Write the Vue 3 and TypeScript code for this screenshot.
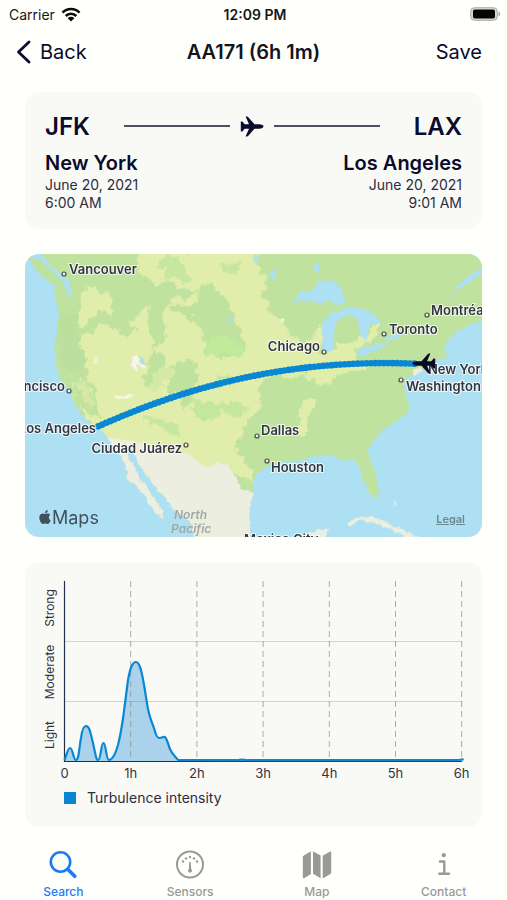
<script setup lang="ts">
import { ref } from 'vue'

interface Place {
  name: string
  x: number
  y: number
  anchor?: 'start' | 'end'
  dot?: [number, number]
}

const places: Place[] = [
  { name: 'Vancouver', x: 44, y: 20, dot: [39, 20] },
  { name: 'Montréal', x: 406, y: 61, dot: [402, 61] },
  { name: 'Toronto', x: 364, y: 80, dot: [359, 80] },
  { name: 'Chicago', x: 295, y: 97, anchor: 'end', dot: [299, 98] },
  { name: 'New York', x: 403, y: 120 },
  { name: 'Washington', x: 381, y: 137, dot: [376, 126] },
  { name: 'San Francisco', x: 40, y: 137, anchor: 'end', dot: [44, 137] },
  { name: 'Los Angeles', x: 71, y: 179, anchor: 'end' },
  { name: 'Ciudad Juárez', x: 157, y: 199, anchor: 'end', dot: [161, 191] },
  { name: 'Dallas', x: 236, y: 181, dot: [232, 182] },
  { name: 'Houston', x: 246, y: 218, dot: [242, 207] },
  { name: 'Mexico City', x: 219, y: 290 },
]

const hours = [0, 1, 2, 3, 4, 5, 6].map((h) => ({
  x: 39.5 + h * 66.2,
  label: h === 0 ? '0' : `${h}h`,
}))

const levels = [
  { name: 'Strong', y: 46 },
  { name: 'Moderate', y: 110 },
  { name: 'Light', y: 173 },
]

const curve =
  'M39.5 198C42 192 43 186 45 186C48 186 48 198 51 198C54 198 54 186 56 176C57 168 59 164 61 164' +
  'C65 164 66 174 68 181C70 190 71 198 73 198C76 198 76 181 78.5 181C81 181 81 198 84 198' +
  'C88 198 91 190 93 183C96 171 97 163 98.5 153L103 118C105 107 107 100 111 100C115 100 117 112 118.5 120' +
  'C121 133 122 145 124.5 153C126 159 128 163 129 166C130 170 132 176 134 176C136 176 138 174.5 140 175' +
  'C143 178 143 184 146 189C148 193 151 195 153 198L212 198.2Q217 197 222 198.2H430Q436 198 438.5 197'

const planePath =
  'M23.5 10.5C23.5 9.3 21.5 8.3 19.5 8.3H14.5L8.3 1.2C7.9 .7 7.5 .4 6.9 .4H5.6L9 8.3H4.7L2.6 5.7C2.4 5.5 2.2 5.4 2 5.4H.8V15.6H2C2.2 15.6 2.4 15.5 2.6 15.3L4.7 12.7H9L5.6 20.6H6.9C7.5 20.6 7.9 20.3 8.3 19.8L14.5 12.7H19.5C21.5 12.7 23.5 11.7 23.5 10.5Z'

const active = ref('Search')
</script>

<template>
  <div class="screen">
    <div class="status">
      <span class="carrier">
        Carrier
        <svg width="20" height="15" viewBox="0 0 20 15" aria-hidden="true">
          <g fill="none" stroke="#0a0a0a" stroke-width="2.6">
            <path d="M1.5 5.6a12 12 0 0 1 17 0" />
            <path d="M4.7 9a7.5 7.5 0 0 1 10.6 0" />
          </g>
          <path d="M10 14.5 6.7 11.2a4.7 4.7 0 0 1 6.6 0z" fill="#0a0a0a" />
        </svg>
      </span>
      <span class="clock">12:09 PM</span>
      <span class="battery">
        <svg width="31" height="14" viewBox="0 0 31 14" aria-hidden="true">
          <rect x=".7" y=".7" width="26.6" height="12.6" rx="3.8" fill="#d9d9d5" stroke="#aaaaa7" />
          <rect x="3" y="2.5" width="22" height="9" rx="1.8" fill="#050505" />
          <path d="M28.5 4.5c2.3.8 2.3 4.2 0 5z" fill="#aaaaa7" />
        </svg>
      </span>
    </div>

    <header class="nav">
      <button type="button" class="nav-btn">
        <svg width="15" height="24" viewBox="0 0 15 24" aria-hidden="true">
          <path d="M13 2 2.5 12 13 22" fill="none" stroke="#0c0c33" stroke-width="2.8" stroke-linecap="round" stroke-linejoin="round" />
        </svg>
        Back
      </button>
      <h1>AA171 (6h 1m)</h1>
      <button type="button" class="nav-btn save">Save</button>
    </header>

    <main class="content">
      <section class="card flight">
        <div class="route">
          <strong class="code">JFK</strong>
          <div class="path">
            <span class="rule"></span>
            <svg width="24" height="21" viewBox="0 0 24 21" aria-hidden="true">
              <path :d="planePath" fill="#0b0b2d" />
            </svg>
            <span class="rule"></span>
          </div>
          <strong class="code">LAX</strong>
        </div>
        <div class="ends">
          <div>
            <h2>New York</h2>
            <p>June 20, 2021</p>
            <p>6:00 AM</p>
          </div>
          <div class="arrival">
            <h2>Los Angeles</h2>
            <p>June 20, 2021</p>
            <p>9:01 AM</p>
          </div>
        </div>
      </section>

      <section class="map">
        <svg class="layer" viewBox="15 11 1371 849" aria-hidden="true">
          <defs>
            <filter id="rough" x="-5%" y="-5%" width="110%" height="110%">
              <feTurbulence type="fractalNoise" baseFrequency="0.035" numOctaves="3" seed="4" />
              <feDisplacementMap in="SourceGraphic" scale="38" xChannelSelector="R" yChannelSelector="G" />
            </filter>
            <filter id="coast" x="-5%" y="-5%" width="110%" height="110%">
              <feTurbulence type="fractalNoise" baseFrequency="0.06" numOctaves="2" seed="9" />
              <feDisplacementMap in="SourceGraphic" scale="14" xChannelSelector="R" yChannelSelector="G" />
            </filter>
            <clipPath id="land">
              <path d="M60 0L88 38L100 55L128 72L148 92L155 125L152 146L144 140L140 112L103 104L106 140L117 190L110 250L103 300L112 360L128 402L150 420L160 455L180 490L200 512L232 528L250 545L265 566L300 612L325 665L318 688L345 702L375 737L388 765L412 792L428 803L432 785L410 755L385 715L355 680L345 650L322 618L318 600L332 592L352 628L370 665L395 695L410 720L440 745L455 775L490 800L515 825L528 870H692L688 800L695 745L703 730L697 700L705 680L725 660L750 645L790 634L850 630L870 620L930 615L970 632L1000 624L1020 655L1030 690L1050 730L1068 748L1076 715L1066 665L1047 622L1045 595L1065 560L1100 530L1140 505L1165 485L1166 455L1152 420L1155 390L1170 372L1185 375L1215 358L1250 330L1285 322L1270 295L1282 270L1310 242L1350 226L1400 205V0Z" />
            </clipPath>
          </defs>
          <rect x="15" y="11" width="1371" height="849" fill="#ade0f3" />
          <g filter="url(#coast)">
            <path d="M20 12L60 30L88 55L112 74L130 95L132 113L100 102L68 80L42 50Z" fill="#bde19f" />
            <g clip-path="url(#land)">
              <rect x="-10" y="-10" width="1420" height="890" fill="#bfe29f" />
              <g filter="url(#rough)">
                <path fill="#e0edab" d="M355 0H705L720 60L738 90L735 130L735 160L765 190L795 225L815 255L850 275L880 262L905 215L915 240L905 300L950 290L1010 265L1045 250L1062 215L1080 250L1040 285L1010 300L1010 330L1045 350L960 372L930 400L885 398L860 370L800 392L770 372L730 392L718 440L712 490L680 515L650 580L665 620L700 660L700 690L650 670L600 640L560 660L500 620L330 590L250 560L200 505L165 440L150 370L180 375L215 420L240 480L235 440L205 390L195 330L175 265L210 240L245 220L290 235L320 260L350 240L335 215L385 165L385 215L400 300L370 390L380 420L410 380L440 340L430 310L400 290L440 260L430 200L450 140L500 145L540 120L480 115L440 80L400 100L370 80L350 50Z" />
                <path fill="#e0edab" d="M205 105L255 125L270 160L285 190L240 175L205 220L175 230L178 170Z" />
                <path fill="#e0edab" d="M860 435L890 450L870 500L860 555L830 550L835 480Z" />
                <path fill="#bfe29f" d="M545 90L600 130L630 170L650 210L680 290L660 320L610 325L550 305L545 240L500 190L455 185L450 165L530 160Z" />
                <path fill="#bfeb9a" d="M570 255L630 265L675 290L665 315L550 310Z" />
                <path fill="#bfe29f" d="M445 350L500 330L530 340L535 390L510 415L520 450L490 480L480 440L440 425Z" />
                <path fill="#c3e79c" d="M515 455L570 450L590 460L650 455L690 470L655 500L600 485L560 505L525 500Z" />
                <path fill="#c5e7a0" d="M365 495L400 505L440 515L475 530L480 555L440 540L410 525L375 515Z" />
                <path fill="#c5e7a0" d="M410 30L470 25L500 60L520 90L490 100L440 70Z" />
                <path fill="#c5e7a0" d="M600 45L660 30L650 65L620 75Z" />
                <path fill="#c5e7a0" d="M580 380L640 375L640 400L590 410Z" />
                <path fill="#d4e9a5" d="M395 365L445 350L470 370L430 390L415 430L390 420Z" />
                <path fill="#bfe29f" d="M150 360L180 380L210 420L235 470L235 500L205 490L175 455Z" />
                <path fill="#d6e8a5" d="M165 380L205 415L225 465L210 475L175 425Z" />
                <path fill="#b8dd9b" d="M115 200L170 190L175 260L195 330L200 360L150 355L125 340Z" opacity=".5" />
              </g>
              <path fill="#eceedf" d="M230 550L265 562L345 572L400 592L440 606L500 608L520 620L545 645L575 650L590 635L620 640L650 680L660 715L705 730V880H230Z" />
              <path fill="#c1e39f" d="M652 685L670 678L697 695L700 726L665 718Z" />
              <path fill="#f7f7ef" d="M338 318L352 314L358 335L378 350L372 355L352 340L347 365L334 345ZM218 338L232 320L230 334ZM285 440L335 432L340 442L288 448ZM780 205L795 208L788 218Z" />
              <path fill="#eceedf" d="M1176 366L1200 350L1210 360L1185 376Z" />
            </g>
            <path fill="#ade0f3" d="M815 158L840 125L880 120L890 92L945 92L965 120L980 160L950 165L925 148L905 163L875 150Z" />
            <path fill="#ade0f3" d="M908 215L940 185L1000 170L1040 180L1072 200L1082 218L1050 225L1040 270L1025 260L1010 200L975 195L950 215L942 250L940 300L915 310L905 270Z" />
            <path fill="#bfe29f" d="M955 215L975 195L1000 195L1005 220L995 248L955 255L945 240Z" />
            <path fill="#ade0f3" d="M1005 310L1030 290L1075 280L1110 278L1070 300L1030 318ZM1090 270L1120 250L1160 245L1135 265ZM1280 155L1310 110L1345 75L1386 50V70L1340 100L1310 120ZM880 40L900 45L895 68L885 65ZM700 11L715 15L712 40L700 28ZM745 70L770 55L765 95ZM355 320L365 318L378 340L370 345ZM478 120L488 125L480 130ZM625 195L634 200L630 225Z" />
            <path fill="#eceedf" d="M980 822L1000 805L1050 797L1095 812L1140 835L1200 862H1160L1120 840L1070 822L1020 808L990 828ZM1118 750L1128 765L1120 770ZM850 862L870 845L930 835L915 862Z" />
          </g>
          <path d="M235 528C500 410 800 325 1185 340" fill="none" stroke="#0a87d3" stroke-width="14" />
          <path d="M235 528C500 410 800 325 1185 340" fill="none" stroke="#0a87d3" stroke-width="20" stroke-linecap="round" stroke-dasharray="0 13" />
        </svg>
        <svg class="layer over" viewBox="0 0 457 283" role="img" aria-label="Flight path from New York to Los Angeles">
          <g class="sea">
            <text x="149" y="265">North</text>
            <text x="146" y="279">Pacific</text>
          </g>
          <g v-for="p in places" :key="p.name">
            <circle v-if="p.dot" :cx="p.dot[0]" :cy="p.dot[1]" r="2" fill="#eeeeee" stroke="#4a4a4a" stroke-width="1.2" />
            <text class="place" :x="p.x" :y="p.y" :text-anchor="p.anchor ?? 'start'">{{ p.name }}</text>
          </g>
          <g transform="translate(411 120) rotate(180)">
            <path transform="translate(0 0)" :d="planePath" fill="#0a0a24" />
          </g>
          <svg x="13" y="256" width="14" height="14" viewBox="0 0 24 24">
            <path fill="#40505c" d="M12.152 6.896c-.948 0-2.415-1.078-3.96-1.04-2.04.027-3.91 1.183-4.961 3.014-2.117 3.675-.546 9.103 1.519 12.09 1.013 1.454 2.208 3.09 3.792 3.039 1.52-.065 2.09-.987 3.935-.987 1.831 0 2.35.987 3.96.948 1.637-.026 2.676-1.48 3.676-2.948 1.156-1.688 1.636-3.325 1.662-3.415-.039-.013-3.182-1.221-3.22-4.857-.026-3.04 2.48-4.494 2.597-4.559-1.429-2.09-3.623-2.324-4.39-2.376-2-.156-3.675 1.09-4.61 1.09zM15.53 3.83c.843-1.012 1.4-2.427 1.245-3.83-1.207.052-2.662.805-3.532 1.818-.78.896-1.454 2.338-1.273 3.714 1.338.104 2.715-.688 3.559-1.701" />
          </svg>
          <text class="brand" x="27" y="270">Maps</text>
        </svg>
        <a href="#legal" class="legal">Legal</a>
      </section>

      <section class="card chart">
        <svg viewBox="0 0 457 218" role="img" aria-label="Turbulence intensity by hour of flight">
          <g stroke="#d3d4d0">
            <path d="M39.5 79.5H437M39.5 139.5H437" />
          </g>
          <path :d="curve + 'V199H39.5Z'" fill="#0a87d3" fill-opacity=".33" />
          <g stroke="#909090" stroke-opacity=".75" stroke-dasharray="6 4">
            <line v-for="h in hours.slice(1)" :key="h.label" :x1="h.x" :x2="h.x" y1="19" y2="199" />
          </g>
          <path d="M39.5 19V199.5H437" fill="none" stroke="#25304a" stroke-width="1.2" />
          <path :d="curve" fill="none" stroke="#0a87d3" stroke-width="2.2" stroke-linejoin="round" />
          <text v-for="h in hours" :key="h.x" class="tick" :x="h.x" y="216" text-anchor="middle">{{ h.label }}</text>
          <text
            v-for="l in levels"
            :key="l.name"
            class="level"
            text-anchor="middle"
            :transform="`translate(29 ${l.y}) rotate(-90)`"
          >{{ l.name }}</text>
        </svg>
        <div class="legend"><span class="swatch"></span>Turbulence intensity</div>
      </section>
    </main>

    <nav class="tabs">
      <button type="button" :class="{ on: active === 'Search' }" @click="active = 'Search'">
        <svg width="30" height="30" viewBox="0 0 30 30" aria-hidden="true">
          <g fill="none" stroke="currentColor" stroke-linecap="round">
            <circle cx="12.5" cy="12" r="9.7" stroke-width="2.6" />
            <path d="M20 19.5 26.8 26.3" stroke-width="3.6" />
          </g>
        </svg>
        Search
      </button>
      <button type="button" :class="{ on: active === 'Sensors' }" @click="active = 'Sensors'">
        <svg width="30" height="30" viewBox="0 0 30 30" aria-hidden="true">
          <circle cx="15" cy="14.5" r="13" fill="none" stroke="currentColor" stroke-width="2" />
          <g fill="currentColor">
            <circle cx="8" cy="11.5" r="1.2" />
            <circle cx="11" cy="8.5" r="1.2" />
            <circle cx="15" cy="7" r="1.2" />
            <circle cx="19" cy="8.5" r="1.2" />
            <circle cx="22" cy="11.5" r="1.2" />
            <path d="M14.3 12h1.4l.5 7a2 2 0 1 1-2.4 0z" />
          </g>
        </svg>
        Sensors
      </button>
      <button type="button" :class="{ on: active === 'Map' }" @click="active = 'Map'">
        <svg width="30" height="30" viewBox="0 0 30 30" aria-hidden="true">
          <g fill="currentColor">
            <path d="M.8 7.2Q.8 6 1.8 5.4L8.9 1.3V24L2.2 28.2Q.8 28.8 .8 27.3Z" />
            <path d="M11 1.2 18.6 5.6V28.2L11 23.8Z" />
            <path d="M20.7 5.8 28 1.5Q29.2 1 29.2 2.5V22.3Q29.2 23.5 28.2 24.1L20.7 28.4Z" />
          </g>
        </svg>
        Map
      </button>
      <button type="button" :class="{ on: active === 'Contact' }" @click="active = 'Contact'">
        <svg width="30" height="30" viewBox="0 0 30 30" aria-hidden="true">
          <circle cx="14.8" cy="5.2" r="2.1" fill="currentColor" />
          <path d="M11 11.5H15.3V23.5M10.3 23.8H20" fill="none" stroke="currentColor" stroke-width="2.4" stroke-linecap="round" stroke-linejoin="round" />
        </svg>
        Contact
      </button>
    </nav>
  </div>
</template>

<style>
body {
  margin: 0;
  background: #fffffb;
}
</style>

<style scoped>
.screen {
  display: flex;
  flex-direction: column;
  min-height: 100vh;
  background: #fffffb;
  color: #0b0b2d;
  font-family: Inter, "Liberation Sans", sans-serif;
}
h1, h2, p {
  margin: 0;
}
button {
  padding: 0;
  border: 0;
  background: none;
  color: inherit;
  font: inherit;
  cursor: pointer;
}
svg {
  display: block;
}
.status {
  display: grid;
  grid-template-columns: 1fr auto 1fr;
  align-items: center;
  height: 28px;
  padding: 0 6px 0 9px;
  color: #161616;
  font-size: 14px;
}
.carrier {
  display: flex;
  align-items: center;
  gap: 6px;
}
.clock {
  font-weight: 600;
}
.battery {
  justify-self: end;
}
.nav {
  display: grid;
  grid-template-columns: 1fr auto 1fr;
  align-items: center;
  height: 48px;
  padding: 0 16px;
}
.nav-btn {
  display: flex;
  align-items: center;
  gap: 9px;
  justify-self: start;
  font-size: 20px;
}
.save {
  justify-self: end;
  padding-right: 9px;
}
h1 {
  color: #14141a;
  font-size: 20px;
  font-weight: 600;
}
.content {
  display: flex;
  flex-direction: column;
  gap: 25px;
  padding: 16px 25px 0;
}
.card {
  border-radius: 14px;
  background: #f9faf6;
}
.flight {
  padding: 20px 20px 17px;
}
.route {
  display: flex;
  align-items: center;
  gap: 34px;
  height: 28px;
}
.code {
  font-size: 24px;
  font-weight: 600;
}
.path {
  display: flex;
  flex: 1;
  align-items: center;
  gap: 10px;
}
.rule {
  flex: 1;
  height: 2px;
  background: #4e5068;
}
.ends {
  display: flex;
  justify-content: space-between;
  margin-top: 11px;
}
.arrival {
  text-align: right;
}
h2 {
  font-size: 20px;
  font-weight: 600;
  line-height: 25px;
}
p {
  color: #2c2c40;
  font-size: 14px;
  line-height: 18px;
}
.map {
  position: relative;
  overflow: hidden;
  border-radius: 14px;
}
.layer {
  width: 100%;
}
.over {
  position: absolute;
  inset: 0;
}
.place {
  fill: #33363d;
  stroke: rgba(255, 255, 255, 0.75);
  stroke-width: 2px;
  paint-order: stroke;
  font-size: 13px;
  font-weight: 600;
}
.sea {
  fill: #a3a8a6;
  font-size: 12px;
  font-style: italic;
  font-weight: 600;
}
.brand {
  fill: #40505c;
  font-size: 18px;
}
.legal {
  position: absolute;
  right: 17px;
  bottom: 11px;
  color: #6f8793;
  font-size: 11px;
  font-weight: 600;
}
.chart svg {
  width: 100%;
}
.tick {
  fill: #34343f;
  font-size: 13px;
}
.level {
  fill: #34343f;
  font-size: 12px;
}
.legend {
  display: flex;
  align-items: center;
  gap: 11px;
  padding: 9px 39px 20px;
  color: #2c2c40;
  font-size: 14px;
  line-height: 18px;
}
.swatch {
  width: 12px;
  height: 12px;
  background: #0a87d3;
}
.tabs {
  display: grid;
  grid-template-columns: repeat(4, 1fr);
  margin-top: auto;
}
.tabs button {
  display: flex;
  flex-direction: column;
  align-items: center;
  gap: 4px;
  color: #999996;
  font-size: 12px;
  font-weight: 500;
  line-height: 16px;
}
.tabs button.on {
  color: #1a7cf5;
}
</style>
